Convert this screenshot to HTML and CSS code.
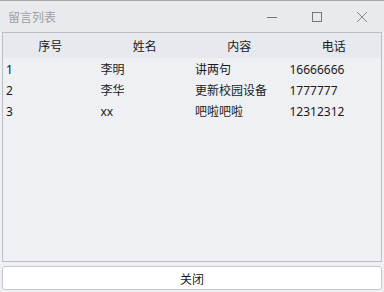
FILE: index.html
```html
<!DOCTYPE html>
<html lang="zh">
<head>
  <meta charset="UTF-8">
  <title>留言列表</title>
  <link rel="stylesheet" href="styles.css">
</head>
<body>
  <div class="window">
    <div class="titlebar">
      <span class="title">留言列表</span>
      <div class="controls">
        <span class="ctrl">
          <svg width="12" height="12" viewBox="0 0 12 12"><path d="M1 6.5h10" stroke="#777" stroke-width="1"/></svg>
        </span>
        <span class="ctrl">
          <svg width="12" height="12" viewBox="0 0 12 12"><rect x="1.5" y="1.5" width="9" height="9" fill="none" stroke="#777" stroke-width="1"/></svg>
        </span>
        <span class="ctrl">
          <svg width="12" height="12" viewBox="0 0 12 12"><path d="M1 1L11 11M11 1L1 11" stroke="#888" stroke-width="1"/></svg>
        </span>
      </div>
    </div>

    <div class="content">
      <div class="table-box">
        <table>
          <thead>
            <tr>
              <th>序号</th>
              <th>姓名</th>
              <th>内容</th>
              <th>电话</th>
            </tr>
          </thead>
          <tbody>
            <tr><td>1</td><td>李明</td><td>讲两句</td><td>16666666</td></tr>
            <tr><td>2</td><td>李华</td><td>更新校园设备</td><td>1777777</td></tr>
            <tr><td>3</td><td>xx</td><td>吧啦吧啦</td><td>12312312</td></tr>
          </tbody>
        </table>
      </div>
      <button class="close-btn">关闭</button>
    </div>
  </div>
</body>
</html>
```

FILE: styles.css
```css
html, body {
  margin: 0;
  padding: 0;
}
body {
  font-family: "Noto Sans", "Noto Sans CJK SC", sans-serif;
  font-size: 12px;
  color: #1a1a1a;
  background-color: #eef0f4;
}
.window {
  width: 384px;
  height: 292px;
  display: flex;
  flex-direction: column;
  background-color: #eef0f4;
  border-top: 1px solid #a8a8a8;
  box-sizing: border-box;
}
.titlebar {
  height: 31px;
  display: flex;
  align-items: center;
  justify-content: space-between;
  background-color: #e8eaee;
  padding-left: 8px;
}
.title {
  color: #a0a0a0;
  font-family: "Noto Sans CJK SC", sans-serif;
  font-size: 12px;
}
.controls {
  display: flex;
  height: 100%;
}
.ctrl {
  width: 45px;
  display: flex;
  align-items: center;
  justify-content: center;
}
.content {
  flex: 1;
  display: flex;
  flex-direction: column;
  padding: 0 2px 2px 2px;
  gap: 4px;
}
.table-box {
  flex: 1;
  border: 1px solid #b9bec6;
  background-color: #eef0f4;
}
table {
  width: 100%;
  border-collapse: collapse;
  table-layout: fixed;
}
th {
  height: 25px;
  font-weight: normal;
  background-color: #e7e9ee;
  text-align: center;
  padding: 0;
}
td {
  height: 20px;
  padding: 1px 0 0 3px;
  text-align: left;
}
.close-btn {
  height: 24px;
  background-color: #ffffff;
  border: 1px solid #c3c7ce;
  border-radius: 3px;
  font-family: "Noto Sans CJK SC", sans-serif;
  font-size: 12px;
  color: #1a1a1a;
  padding: 0;
}
```
